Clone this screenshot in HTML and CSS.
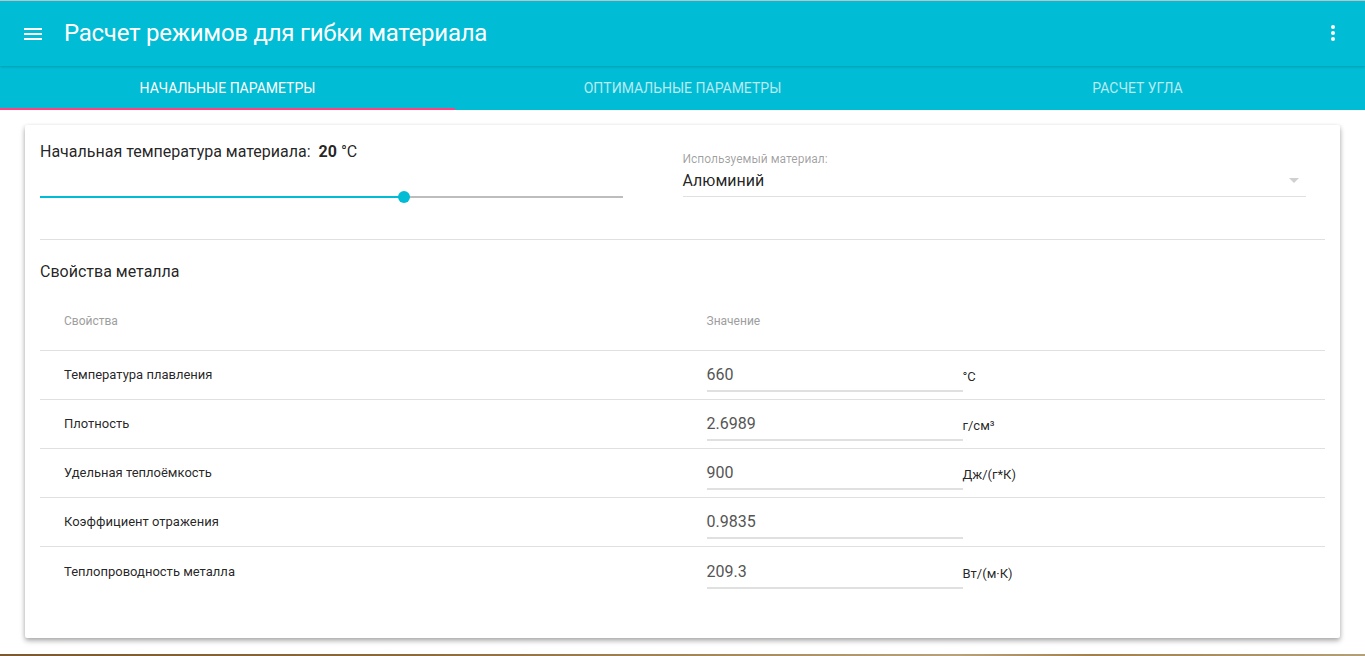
FILE: index.html
```html
<!DOCTYPE html>
<html lang="ru">
<head>
<meta charset="utf-8">
<title>Расчет режимов для гибки материала</title>
<link rel="stylesheet" href="styles.css">
</head>
<body>
<div class="page">
  <header class="appbar">
    <div class="toolbar">
      <button class="icon-btn menu" aria-label="menu">
        <svg width="18" height="12" viewBox="0 0 18 12"><rect x="0" y="0" width="18" height="2" fill="#fff"/><rect x="0" y="5" width="18" height="2" fill="#fff"/><rect x="0" y="10" width="18" height="2" fill="#fff"/></svg>
      </button>
      <h1 class="title">Расчет режимов для гибки материала</h1>
      <button class="icon-btn more" aria-label="more">
        <svg width="4" height="16" viewBox="0 0 4 16"><circle cx="2" cy="2" r="2" fill="#fff"/><circle cx="2" cy="8" r="2" fill="#fff"/><circle cx="2" cy="14" r="2" fill="#fff"/></svg>
      </button>
    </div>
    <nav class="tabs">
      <div class="tab active">Начальные параметры</div>
      <div class="tab">Оптимальные параметры</div>
      <div class="tab">Расчет угла</div>
      <div class="indicator"></div>
    </nav>
  </header>

  <main class="content">
    <section class="card">
      <div class="top-row">
        <div class="temp-col">
          <div class="temp-label">Начальная температура материала:&nbsp; <b>20</b> °C</div>
          <div class="slider">
            <div class="slider-fill" style="width: 364px"></div>
            <div class="slider-thumb" style="left: 364px"></div>
          </div>
        </div>
        <div class="select-col">
          <div class="select-label">Используемый материал:</div>
          <div class="select-value">
            <span>Алюминий</span>
            <svg class="select-arrow" width="10" height="5" viewBox="0 0 10 5"><polygon points="0,0 10,0 5,5" fill="#d0d0d0"/></svg>
          </div>
        </div>
      </div>

      <hr class="divider">

      <h2 class="section-title">Свойства металла</h2>

      <div class="table">
        <div class="tr thead">
          <div class="td name">Свойства</div>
          <div class="td val">Значение</div>
        </div>
        <div class="tr">
          <div class="td name">Температура плавления</div>
          <div class="td val"><span class="input">660</span><span class="unit">°C</span></div>
        </div>
        <div class="tr">
          <div class="td name">Плотность</div>
          <div class="td val"><span class="input">2.6989</span><span class="unit">г/см³</span></div>
        </div>
        <div class="tr">
          <div class="td name">Удельная теплоёмкость</div>
          <div class="td val"><span class="input">900</span><span class="unit">Дж/(г*К)</span></div>
        </div>
        <div class="tr">
          <div class="td name">Коэффициент отражения</div>
          <div class="td val"><span class="input">0.9835</span><span class="unit"></span></div>
        </div>
        <div class="tr last">
          <div class="td name">Теплопроводность металла</div>
          <div class="td val"><span class="input">209.3</span><span class="unit">Вт/(м·К)</span></div>
        </div>
      </div>
    </section>
  </main>
  <div class="bottom-strip"></div>
</div>
</body>
</html>
```

FILE: styles.css
```css
* { box-sizing: border-box; }

html, body {
  margin: 0;
  padding: 0;
  background: #fff;
  font-family: Roboto, "Liberation Sans", Arial, sans-serif;
  color: rgba(0, 0, 0, 0.87);
}

.page {
  height: 656px;
  display: flex;
  flex-direction: column;
  overflow: hidden;
}

.appbar {
  background: #00bcd4;
  border-top: 1px solid #c4c4c4;
  position: relative;
  flex: none;
}

.toolbar {
  height: 65px;
  display: flex;
  align-items: center;
  padding: 0 24px 0 24px;
  box-shadow: 0 1px 2px rgba(0, 0, 0, 0.16);
  position: relative;
  z-index: 1;
}

.icon-btn {
  border: 0;
  background: transparent;
  padding: 0;
  display: flex;
  align-items: center;
  justify-content: center;
  cursor: pointer;
}

.menu {
  width: 18px;
  height: 12px;
  margin-right: 22px;
}

.title {
  margin: 0;
  font-size: 24px;
  letter-spacing: -0.26px;
  font-weight: 400;
  color: #fff;
  flex: 1;
  line-height: 32px;
  padding-bottom: 2px;
}

.more {
  width: 4px;
  height: 16px;
  margin-right: 6px;
  margin-bottom: 2px;
}

.tabs {
  display: flex;
  height: 44px;
  position: relative;
}

.tab {
  flex: 1;
  display: flex;
  align-items: center;
  justify-content: center;
  text-transform: uppercase;
  font-size: 14px;
  color: rgba(255, 255, 255, 0.72);
  padding-bottom: 1px;
}

.tab.active {
  color: #fff;
}

.indicator {
  position: absolute;
  left: 0;
  bottom: 0;
  width: 33.333%;
  height: 2px;
  background: #ff4081;
}

.content {
  flex: 1;
  padding: 15px 25px 0 25px;
}

.card {
  background: #fff;
  box-shadow: 0 3px 6px rgba(0, 0, 0, 0.18), 0 2px 4px rgba(0, 0, 0, 0.22);
  padding: 15px 15px 42px 15px;
  border-radius: 2px;
}

.top-row {
  display: flex;
  height: 99px;
}

.temp-col {
  width: 50%;
  padding-right: 60px;
}

.temp-label {
  font-size: 16px;
  line-height: 24px;
  color: rgba(0, 0, 0, 0.87);
}

.temp-label b {
  font-weight: 700;
}

.slider {
  position: relative;
  margin-top: 32px;
  height: 2px;
  background: #bdbdbd;
}

.slider-fill {
  position: absolute;
  left: 0;
  top: 0;
  height: 2px;
  background: #00bcd4;
}

.slider-thumb {
  position: absolute;
  top: -5px;
  width: 12px;
  height: 12px;
  margin-left: -6px;
  border-radius: 50%;
  background: #00bcd4;
}

.select-col {
  width: 50%;
  padding-right: 19px;
  padding-top: 12px;
}

.select-label {
  font-size: 12px;
  line-height: 14px;
  color: rgba(0, 0, 0, 0.38);
}

.select-value {
  display: flex;
  align-items: center;
  justify-content: space-between;
  font-size: 16px;
  height: 31px;
  padding-bottom: 2px;
  border-bottom: 1px solid #e0e0e0;
}

.select-arrow {
  margin-right: 7px;
}

.divider {
  border: 0;
  border-top: 1px solid #e0e0e0;
  margin: 0;
}

.section-title {
  margin: 0;
  font-size: 16px;
  font-weight: 400;
  line-height: 24px;
  padding-top: 20px;
  padding-bottom: 12px;
}

.table {
  display: flex;
  flex-direction: column;
}

.tr {
  display: flex;
  align-items: center;
  height: 49px;
  border-bottom: 1px solid #e0e0e0;
}

.tr.last {
  border-bottom: 0;
}

.tr.thead {
  height: 55px;
}

.td {
  width: 50%;
  padding-left: 24px;
  display: flex;
  align-items: center;
}

.td.name {
  font-size: 13px;
  padding-bottom: 1px;
}

.thead .td {
  font-size: 12px;
  color: #9e9e9e;
  padding-bottom: 4px;
}

.input {
  width: 256px;
  font-size: 16px;
  line-height: 24px;
  height: 40px;
  padding-top: 11px;
  margin-top: -6px;
  border-bottom: 2px solid #e0e0e0;
  color: #555;
}

.unit {
  font-size: 13px;
  margin-top: 3px;
}

.bottom-strip {
  height: 2px;
  flex: none;
  margin-top: auto;
  background: linear-gradient(90deg, #7a5a2e 0%, #8c6a3c 30%, #a88c5e 55%, #b8a27c 70%, #a2804e 80%, #b2a078 100%);
}
```
